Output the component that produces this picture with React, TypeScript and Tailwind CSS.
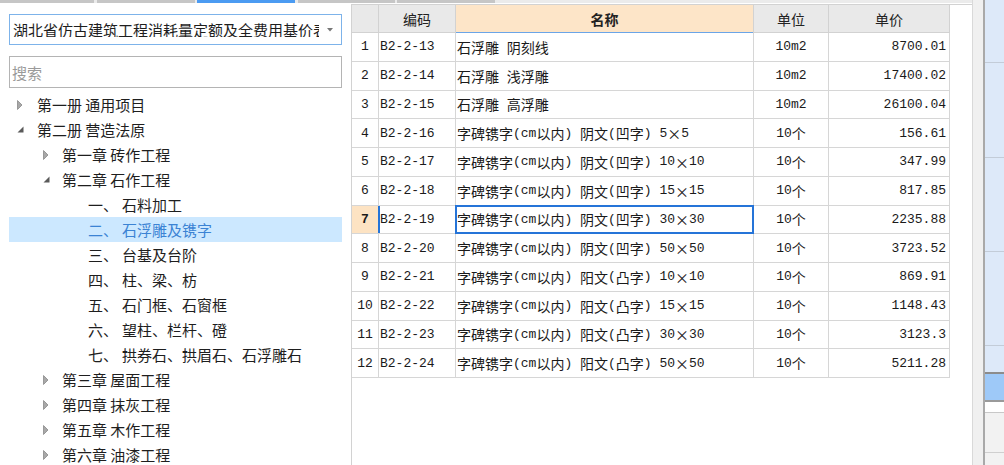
import React from "react";

type TreeRow = { lvl: 1 | 2 | 3; arrow?: "c" | "e"; num?: string; text: string; sel?: boolean };

const tree: TreeRow[] = [
  { lvl: 1, arrow: "c", text: "第一册 通用项目" },
  { lvl: 1, arrow: "e", text: "第二册 营造法原" },
  { lvl: 2, arrow: "c", text: "第一章 砖作工程" },
  { lvl: 2, arrow: "e", text: "第二章 石作工程" },
  { lvl: 3, num: "一、", text: "石料加工" },
  { lvl: 3, num: "二、", text: "石浮雕及镌字", sel: true },
  { lvl: 3, num: "三、", text: "台基及台阶" },
  { lvl: 3, num: "四、", text: "柱、梁、枋" },
  { lvl: 3, num: "五、", text: "石门框、石窗框" },
  { lvl: 3, num: "六、", text: "望柱、栏杆、磴" },
  { lvl: 3, num: "七、", text: "拱券石、拱眉石、石浮雕石" },
  { lvl: 2, arrow: "c", text: "第三章 屋面工程" },
  { lvl: 2, arrow: "c", text: "第四章 抹灰工程" },
  { lvl: 2, arrow: "c", text: "第五章 木作工程" },
  { lvl: 2, arrow: "c", text: "第六章 油漆工程" },
];

const rows: [string, string, string, string, string][] = [
  ["1", "B2-2-13", "石浮雕 阴刻线", "10m2", "8700.01"],
  ["2", "B2-2-14", "石浮雕 浅浮雕", "10m2", "17400.02"],
  ["3", "B2-2-15", "石浮雕 高浮雕", "10m2", "26100.04"],
  ["4", "B2-2-16", "字碑镌字(cm以内) 阴文(凹字) 5×5", "10个", "156.61"],
  ["5", "B2-2-17", "字碑镌字(cm以内) 阴文(凹字) 10×10", "10个", "347.99"],
  ["6", "B2-2-18", "字碑镌字(cm以内) 阴文(凹字) 15×15", "10个", "817.85"],
  ["7", "B2-2-19", "字碑镌字(cm以内) 阴文(凹字) 30×30", "10个", "2235.88"],
  ["8", "B2-2-20", "字碑镌字(cm以内) 阴文(凹字) 50×50", "10个", "3723.52"],
  ["9", "B2-2-21", "字碑镌字(cm以内) 阳文(凸字) 10×10", "10个", "869.91"],
  ["10", "B2-2-22", "字碑镌字(cm以内) 阳文(凸字) 15×15", "10个", "1148.43"],
  ["11", "B2-2-23", "字碑镌字(cm以内) 阳文(凸字) 30×30", "10个", "3123.3"],
  ["12", "B2-2-24", "字碑镌字(cm以内) 阳文(凸字) 50×50", "10个", "5211.28"],
];

function Mixed({ text }: { text: string }) {
  const parts = text.match(/[\x20-\x7e]+|[^\x20-\x7e]+/g) || [];
  return (
    <>
      {parts.map((p, i) =>
        /^[\x20-\x7e]+$/.test(p) ? (
          <span key={i} className="whitespace-pre font-['Liberation_Mono',monospace] text-[13px]">
            {p}
          </span>
        ) : (
          <span key={i} className="whitespace-pre font-['Noto_Sans_CJK_SC',sans-serif] text-[14px]">
            {p}
          </span>
        )
      )}
    </>
  );
}

function Collapsed() {
  return (
    <svg width="6" height="10" viewBox="0 0 6 10">
      <path d="M0.5 0.5 L5 5 L0.5 9.5 Z" fill="#a8a8a8" stroke="#8a8a8a" strokeWidth="0.8" />
    </svg>
  );
}

function Expanded() {
  return (
    <svg width="7" height="7" viewBox="0 0 7 7">
      <path d="M6.5 0.5 L6.5 6.5 L0.5 6.5 Z" fill="#5a5a5a" />
    </svg>
  );
}

function LeftPanel() {
  return (
    <div className="w-[351px] h-full overflow-hidden bg-white pl-[9px] pr-[9px] pt-[11px] font-['Noto_Sans_CJK_SC',sans-serif] text-[15px] text-[#1e1e1e]">
      <div className="h-[31px] w-[333px] border border-[#7db3ea] flex items-center pl-[3px] pr-[8px]">
        <div className="flex-1 overflow-hidden whitespace-nowrap leading-none">湖北省仿古建筑工程消耗量定额及全费用基价表</div>
        <svg width="6" height="4" viewBox="0 0 6 4" className="ml-[8px]">
          <path d="M0 0 L6 0 L3 3.5 Z" fill="#777" />
        </svg>
      </div>
      <div className="mt-[11px] h-[32px] w-[333px] border border-[#b4b4b4] flex items-center pl-[2px] text-[#9a9a9a] leading-none">
        搜索
      </div>
      <div className="mt-[4px] w-[333px]">
        {tree.map((r, i) => (
          <div
            key={i}
            className={
              "h-[25px] flex items-center whitespace-nowrap leading-none " +
              (r.sel ? "bg-[#cce8ff] text-[#3b83d4]" : "")
            }
          >
            {r.lvl === 1 && (
              <div className="pl-[8px] w-[28px] flex items-center">{r.arrow === "c" ? <Collapsed /> : <Expanded />}</div>
            )}
            {r.lvl === 2 && (
              <div className="pl-[34px] w-[53px] flex items-center">{r.arrow === "c" ? <Collapsed /> : <Expanded />}</div>
            )}
            {r.lvl === 3 && <div className="w-[79px]" />}
            {r.num && <span className="mr-[4px]">{r.num}</span>}
            <span>{r.text}</span>
          </div>
        ))}
      </div>
    </div>
  );
}

function Table() {
  return (
    <div className="w-[621px] h-[462px] mt-[1px] border-t border-l border-[#d2d2d2] bg-white overflow-hidden">
      <div className="flex h-[28px] border-b border-[#d2d2d2] font-['Noto_Sans_CJK_SC',sans-serif] text-[14px] text-[#222] leading-none w-[598px]">
        <div className="w-[27px] border-r border-[#d2d2d2] bg-[#e9e9e9]" />
        <div className="w-[77px] border-r border-[#d2d2d2] bg-[#e9e9e9] flex items-center justify-center">编码</div>
        <div className="w-[298px] border-r border-[#d2d2d2] bg-[#fde5c8] flex items-center justify-center font-bold relative">
          名称
          <div className="absolute left-0 right-0 -bottom-px h-[1px] bg-[#6aa5e8]" />
        </div>
        <div className="w-[75px] border-r border-[#d2d2d2] bg-[#e9e9e9] flex items-center justify-center">单位</div>
        <div className="w-[121px] border-r border-[#d2d2d2] bg-[#e9e9e9] flex items-center justify-center">单价</div>
      </div>
      {rows.map((r, i) => {
        const sel = r[0] === "7";
        return (
          <div key={i} className="flex h-[28.75px] border-b border-[#d6d6d6] w-[598px] text-[#1a1a1a] leading-none">
            <div
              className={
                "w-[27px] border-r border-[#d6d6d6] flex items-center justify-center font-['Liberation_Mono',monospace] text-[13px] " +
                (sel ? "bg-[#fde3c3] font-bold" : "")
              }
            >
              {r[0]}
            </div>
            <div className="w-[77px] border-r border-[#d6d6d6] flex items-center pl-[1px] font-['Liberation_Mono',monospace] text-[13px] relative">
              {sel && <div className="absolute -left-px top-0 bottom-0 w-[2px] bg-[#2574d8]" />}
              {r[1]}
            </div>
            <div className="w-[298px] border-r border-[#d6d6d6] flex items-center pl-[1px] relative whitespace-nowrap">
              {sel && <div className="absolute -left-px -top-px -right-px -bottom-px border-2 border-[#2574d8]" />}
              <Mixed text={r[2]} />
            </div>
            <div className="w-[75px] border-r border-[#d6d6d6] flex items-center justify-center">
              <Mixed text={r[3]} />
            </div>
            <div className="w-[121px] border-r border-[#d6d6d6] flex items-center justify-end pr-[3px] font-['Liberation_Mono',monospace] text-[13px]">
              {r[4]}
            </div>
          </div>
        );
      })}
    </div>
  );
}

function RightPanel() {
  return (
    <div className="w-[19px] h-full flex flex-col bg-[#dde9f9]">
      <div className="h-[63px] border-b border-[#c3ccd8]" />
      <div className="h-[95px] border-b border-[#c3ccd8]" />
      <div className="h-[94px] border-b border-[#c3ccd8]" />
      <div className="h-[94px] border-b border-[#c3ccd8]" />
      <div className="h-[26px]" />
      <div className="h-[2px] bg-[#8c8c8c]" />
      <div className="h-[26px] bg-[#9ec9f8]" />
      <div className="h-[2px] bg-[#9a9a9a]" />
      <div className="h-[11px] bg-white border-b border-[#c8c8c8]" />
      <div className="flex-1 bg-[#f2f2f2] flex flex-col">
        <div className="h-[40px] border-b border-[#cfcfcf]" />
      </div>
    </div>
  );
}

export default function App() {
  return (
    <div className="w-[1004px] h-[465px] flex bg-white overflow-hidden">
      <div className="w-[972px] h-full flex flex-col">
        <div className="h-[3px] flex bg-[#ebebeb] shrink-0">
          <div className="w-[94px] bg-[#c6c6c6]" />
          <div className="w-[98px] ml-[3px] bg-[#c6c6c6]" />
          <div className="w-[98px] ml-[2px] bg-[#4b9bf2]" />
          <div className="w-[97px] ml-[3px] bg-[#c6c6c6]" />
          <div className="w-[98px] ml-[2px] bg-[#c6c6c6]" />
        </div>
        <div className="flex flex-1 min-h-0">
          <LeftPanel />
          <Table />
        </div>
      </div>
      <div className="w-[1px] h-full bg-[#d9d9d9]" />
      <div className="w-[10px] h-full bg-[#f0f0f0]" />
      <div className="w-[2px] h-full bg-[#a9a9a9]" />
      <RightPanel />
    </div>
  );
}
